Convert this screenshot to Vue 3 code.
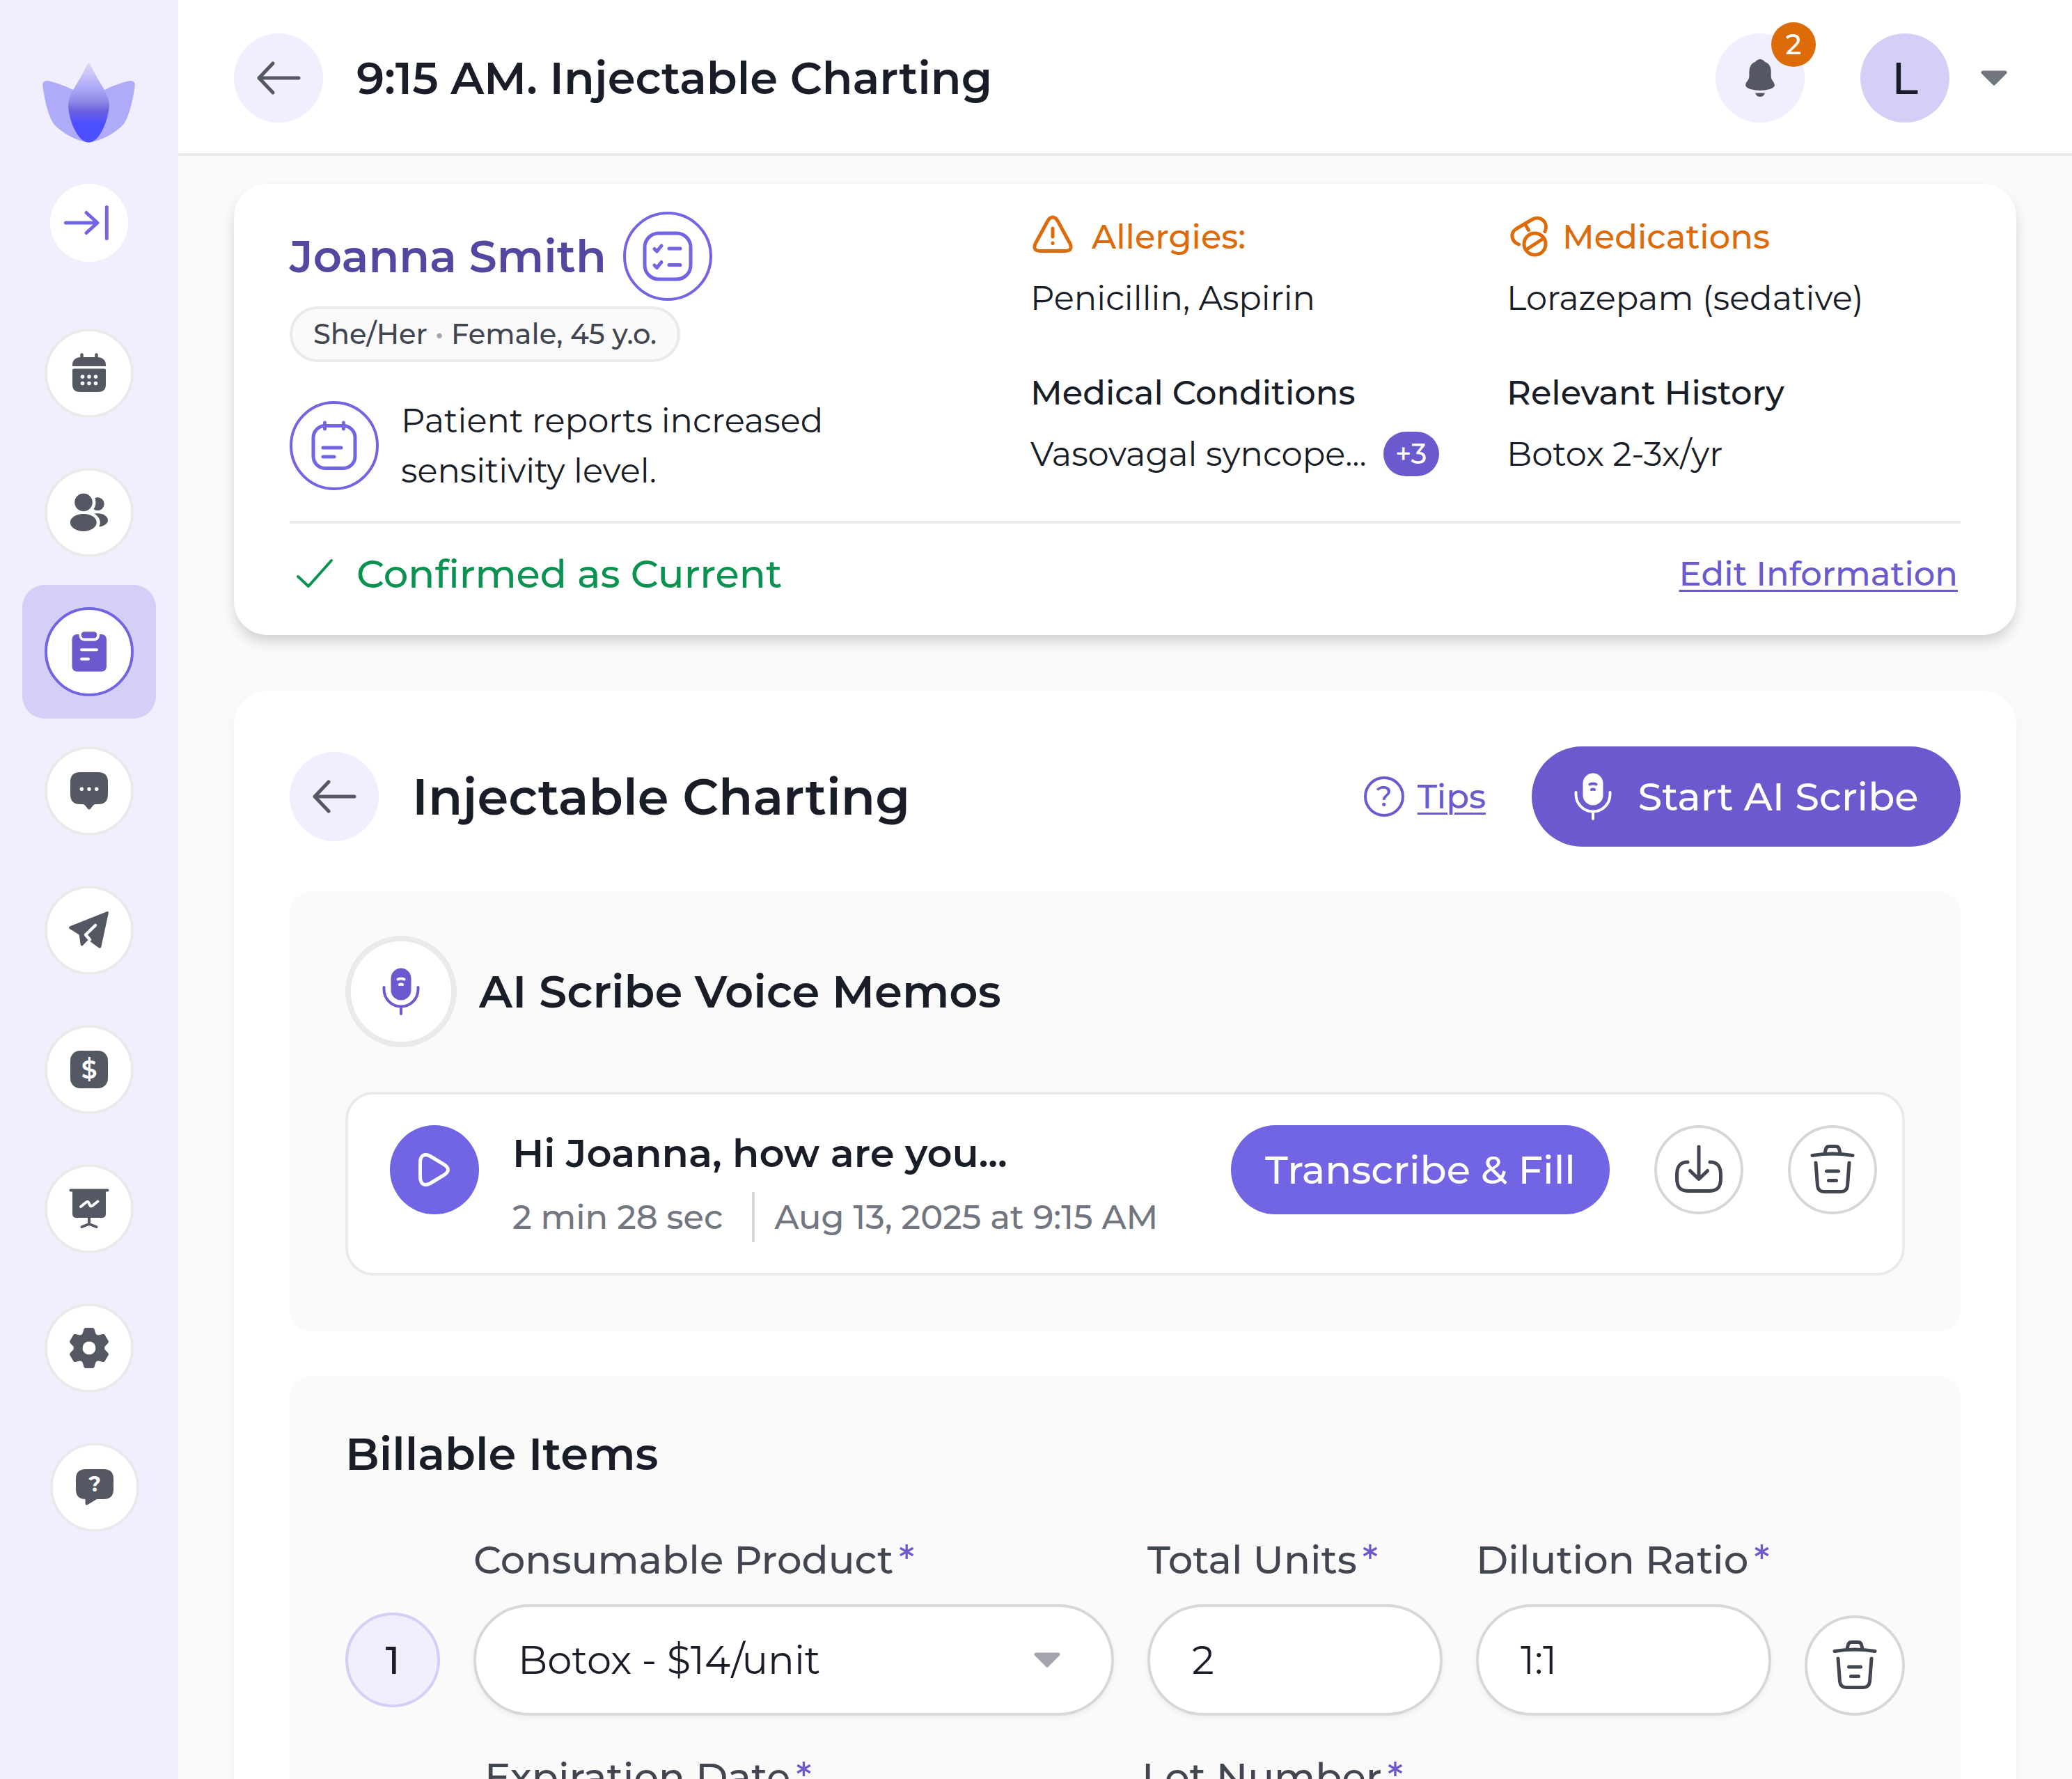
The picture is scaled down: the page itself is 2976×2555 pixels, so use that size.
<template>
  <div class="app">
    <aside class="sidebar">
      <svg class="logo" viewBox="0 0 134 116" aria-hidden="true">
        <defs>
          <linearGradient id="petal" x1="0" y1="0" x2="0" y2="1">
            <stop offset="0" stop-color="#dcd9f6" />
            <stop offset="0.3" stop-color="#b0abf8" />
            <stop offset="0.48" stop-color="#9089e6" />
            <stop offset="0.6" stop-color="#6e61df" />
            <stop offset="0.76" stop-color="#4c4fff" />
          </linearGradient>
        </defs>
        <path :d="sidePetal" fill="#b0abf8" />
        <path :d="sidePetal" fill="#b0abf8" transform="translate(133 0) scale(-1 1)" />
        <path
          d="M66.500 1Q68 1 69 3C74 14 80 24 86 34Q96 50 96 62C94 84 82 114.500 66.500 114.500C51 114.500 38 84 37 62Q37 50 47 34C53 24 59 14 64 3Q65 1 66.500 1Z"
          fill="url(#petal)" />
      </svg>

      <button class="collapse-btn" type="button" aria-label="Expand menu">
        <svg viewBox="0 0 112 112" class="line-icon">
          <path d="M22.500 56H67M52 41.500L68 56L52 70.500M81.300 33.500V78.500" />
        </svg>
      </button>

      <nav class="nav">
        <a v-for="item in navItems" :key="item.name" href="#" class="nav-item"
          :class="{ active: item.name === activeItem, help: item.name === 'Help' }" :aria-label="item.name"
          @click.prevent="activeItem = item.name">
          <span class="nav-circle">
            <svg viewBox="0 0 128 128" v-html="item.icon"></svg>
          </span>
        </a>
      </nav>
    </aside>

    <div class="main">
      <header class="topbar">
        <button class="back-btn" type="button" aria-label="Back">
          <svg viewBox="0 0 128 128" class="line-icon">
            <path :d="backArrow" />
          </svg>
        </button>
        <h1 class="page-title">9:15 AM. Injectable Charting</h1>
        <button class="bell-btn" type="button" aria-label="Notifications">
          <svg viewBox="0 0 128 128">
            <path
              d="M64 37Q68 37 70.500 40.500Q79.700 44 79.700 55V62Q79.700 65 82 68Q85 71.500 85 74.500Q84 78 78 80Q64 84 50 80Q44 78 43 74.500Q43 71 46 68Q48.400 65 48.400 62V55Q48.400 44 57.500 40.500Q60 37 64 37ZM57 85.500H71Q69 91 64 91Q59 91 57 85.500Z"
              fill="#535862" />
          </svg>
          <span class="bell-count">2</span>
        </button>
        <button class="account" type="button" aria-label="Account menu">
          <span class="avatar">L</span>
          <span class="account-caret">
            <svg class="caret" viewBox="0 0 38 22"><path d="M3 3H35L19 19Z" /></svg>
          </span>
        </button>
      </header>

      <main class="content">
        <section class="card patient">
          <div class="patient-info">
            <div class="patient-left">
              <div class="name-row">
                <h2 class="patient-name">Joanna Smith</h2>
                <button class="ring-btn" type="button" aria-label="Patient checklist">
                  <svg viewBox="0 0 128 128" class="line-icon">
                    <rect x="31" y="31" width="66" height="66" rx="20" />
                    <path d="M45 53.500L48.500 57L55 49M66 53H82M45 77L48.500 80.500L55 72.500M66 76.500H82" />
                  </svg>
                </button>
              </div>
              <p class="pill">She/Her <span class="pill-dot">•</span> Female, 45 y.o.</p>
              <div class="note-row">
                <button class="ring-btn" type="button" aria-label="Patient notes">
                  <svg viewBox="0 0 128 128" class="line-icon">
                    <rect x="34" y="35.500" width="60" height="61" rx="17" />
                    <path d="M50.500 31V40M77.500 31V40M48 67H74M48 80H64" />
                  </svg>
                </button>
                <p class="note">Patient reports increased sensitivity level.</p>
              </div>
            </div>

            <dl class="facts">
              <div class="fact">
                <dt class="warn">
                  <svg viewBox="0 0 64 64" class="line-icon">
                    <path
                      d="M32 4Q36 4 39 9L57 42Q61 52 50 52.500H14Q3 52 7 42L25 9Q28 4 32 4ZM32 20V32M32 41V41.500" />
                  </svg>
                  Allergies:
                </dt>
                <dd>Penicillin, Aspirin</dd>
              </div>
              <div class="fact">
                <dt class="warn meds">
                  <svg viewBox="0 0 64 64" class="line-icon">
                    <path d="M17.500 43C7 39 4 27 14 20.500L37 7C48 1 61 11 55 24.500M26.500 14L31.500 22.500" />
                    <circle cx="40.500" cy="42.500" r="15.500" />
                    <path d="M29 50L52 35" />
                  </svg>
                  Medications
                </dt>
                <dd>Lorazepam (sedative)</dd>
              </div>
              <div class="fact">
                <dt>Medical Conditions</dt>
                <dd>Vasovagal syncope... <span class="more">+3</span></dd>
              </div>
              <div class="fact">
                <dt>Relevant History</dt>
                <dd>Botox 2-3x/yr</dd>
              </div>
            </dl>
          </div>

          <div class="patient-footer">
            <p class="confirmed">
              <svg viewBox="0 0 72 72" class="line-icon"><path d="M12 40L27 54L60 17" /></svg>
              Confirmed as Current
            </p>
            <a href="#" class="link">Edit Information</a>
          </div>
        </section>

        <section class="card charting">
          <div class="charting-head">
            <button class="back-btn" type="button" aria-label="Back to charts">
              <svg viewBox="0 0 128 128" class="line-icon">
                <path :d="backArrow" />
              </svg>
            </button>
            <h2 class="charting-title">Injectable Charting</h2>
            <a href="#" class="tips">
              <svg viewBox="0 0 64 64" aria-hidden="true">
                <circle cx="32" cy="32" r="27" fill="none" stroke="currentColor" stroke-width="4" />
                <text x="32" y="46" text-anchor="middle" font-size="40" font-weight="500" fill="currentColor">?</text>
              </svg>
              <span class="link">Tips</span>
            </a>
            <button class="scribe-btn" type="button">
              <svg viewBox="0 0 72 72" class="mic">
                <rect x="21.500" y="2.500" width="29" height="46" rx="14.500" />
                <path class="mic-stand" d="M11.500 30V33A24.500 24.500 0 0 0 60.500 33V30M36 58V68" />
                <path class="mic-marks" d="M31.500 18.500Q36 16.500 40.500 18.500M34 26Q36 25 38 26" />
              </svg>
              Start AI Scribe
            </button>
          </div>

          <section class="panel">
            <div class="memos-head">
              <span class="mic-badge">
                <svg viewBox="0 0 72 72" class="mic">
                  <rect x="21.500" y="2.500" width="29" height="46" rx="14.500" />
                  <path class="mic-stand" d="M11.500 30V33A24.500 24.500 0 0 0 60.500 33V30M36 58V68" />
                  <path class="mic-marks" d="M31.500 18.500Q36 16.500 40.500 18.500M34 26Q36 25 38 26" />
                </svg>
              </span>
              <h3 class="panel-title">AI Scribe Voice Memos</h3>
            </div>

            <article class="memo">
              <button class="play-btn" type="button" aria-label="Play memo">
                <svg viewBox="0 0 128 128" class="line-icon">
                  <path
                    d="M43.500 54C43.500 43 50 40 58 44.500L77 56Q90 64 77 72L58 83.500C50 88 43.500 85 43.500 74Z" />
                </svg>
              </button>
              <div class="memo-text">
                <h4 class="memo-title">Hi Joanna, how are you...</h4>
                <p class="memo-meta">
                  <span>2 min 28 sec</span>
                  <span class="memo-date">Aug 13, 2025 at 9:15 AM</span>
                </p>
              </div>
              <button class="fill-btn" type="button">Transcribe &amp; Fill</button>
              <button class="icon-btn" type="button" aria-label="Download memo">
                <svg viewBox="0 0 128 128" class="line-icon">
                  <path
                    d="M64 31V77M51.500 65.500L64 77.500L76.500 65.500M48 53C36 53 32.500 60 32.500 72V76C32.500 90 38 94.500 50 94.500H78C90 94.500 95.500 90 95.500 76V72C95.500 60 92 53 80 53" />
                </svg>
              </button>
              <button class="icon-btn" type="button" aria-label="Delete memo">
                <svg viewBox="0 0 128 128" class="line-icon"><path :d="trash" /></svg>
              </button>
            </article>
          </section>

          <section class="panel">
            <h3 class="panel-title">Billable Items</h3>
            <div class="item-row">
              <span class="item-number">1</span>
              <div class="field product">
                <label for="product">Consumable Product<span class="required">*</span></label>
                <div class="select-wrap">
                  <select id="product" v-model="product">
                    <option>Botox - $14/unit</option>
                  </select>
                  <svg class="caret" viewBox="0 0 38 22"><path d="M3 3H35L19 19Z" /></svg>
                </div>
              </div>
              <div class="field">
                <label for="units">Total Units<span class="required">*</span></label>
                <input id="units" v-model="units" type="text" />
              </div>
              <div class="field">
                <label for="ratio">Dilution Ratio<span class="required">*</span></label>
                <input id="ratio" v-model="ratio" type="text" />
              </div>
              <button class="icon-btn large" type="button" aria-label="Delete item">
                <svg viewBox="0 0 128 128" class="line-icon"><path :d="trash" /></svg>
              </button>
            </div>
            <div class="item-extra">
              <div class="field">
                <label for="expiration">Expiration Date<span class="required">*</span></label>
                <input id="expiration" v-model="expiration" type="text" />
              </div>
              <div class="field">
                <label for="lot">Lot Number<span class="required">*</span></label>
                <input id="lot" v-model="lot" type="text" />
              </div>
            </div>
          </section>
        </section>
      </main>
    </div>
  </div>
</template>

<script setup>
import { ref } from 'vue';

const activeItem = ref('Charts');
const product = ref('Botox - $14/unit');
const units = ref('2');
const ratio = ref('1:1');
const expiration = ref('');
const lot = ref('');

const sidePetal =
  'M45 39.500Q26 30 8 26Q0 25 0.300 32.500C2 48 6 66 11 78Q14 86 18 90C28 100 46 112 66.500 114.500Z';
const backArrow = 'M56 43L36 64L56 85M36 64H93';
const trash =
  'M35 43.500Q64 38.500 93 43.500M53 40L54.500 34Q55.500 30.500 59.500 30.500H68.500Q72.500 30.500 73.500 34L75 40' +
  'M40 54L42.500 87Q43.500 95.500 52 95.500H76Q84.500 95.500 85.500 87L88 54M55.500 66H72.500M58.500 79.500H69.500';

// One gear tooth, repeated every 60 degrees around the hub
const tooth = 'M-11 -19Q-9.500 -20 -9 -22L-7.500 -27Q-6.800 -29 -5 -29H5Q6.800 -29 7.500 -27L9 -22Q9.500 -20 11 -19V0H-11Z';
const gearTeeth = [0, 60, 120, 180, 240, 300]
  .map((angle) => `<path d="${tooth}" transform="translate(64 64) rotate(${angle})" />`)
  .join('');

const navItems = [
  {
    name: 'Calendar',
    icon: `<path d="M40 54V52C40 45 45 41 52 41H76C83 41 88 45 88 52V54ZM42 57.500H86Q88 57.500 88 59V80Q88 91 77 91H51Q40 91 40 80V59Q40 57.500 42 57.500Z" />
      <path d="M53.500 37.500V43M74.500 37.500V43" stroke="currentColor" stroke-width="4.500" stroke-linecap="round" />
      <g fill="#fff"><circle cx="54.500" cy="69" r="2.800" /><circle cx="64" cy="69" r="2.800" /><circle cx="73.500" cy="69" r="2.800" />
      <circle cx="54.500" cy="78.500" r="2.800" /><circle cx="64" cy="78.500" r="2.800" /><circle cx="73.500" cy="78.500" r="2.800" /></g>`
  },
  {
    name: 'Patients',
    icon: `<circle cx="76.200" cy="51.800" r="9.500" /><ellipse cx="76" cy="75" rx="15" ry="9.700" />
      <circle cx="56" cy="49.500" r="17.500" fill="#fff" /><ellipse cx="55.800" cy="78.400" rx="24" ry="17" fill="#fff" />
      <circle cx="56" cy="49.500" r="12.800" /><ellipse cx="55.800" cy="78.400" rx="18.900" ry="12.500" />`
  },
  {
    name: 'Charts',
    icon: `<rect x="39.500" y="39" width="49.500" height="53.500" rx="7" />
      <rect x="49.500" y="31" width="29.500" height="17.500" rx="8" fill="#fff" />
      <rect x="52.700" y="35.200" width="22.600" height="9.300" rx="4.600" />
      <path d="M53 61.300H75M53 74.500H63" stroke="#fff" stroke-width="4" stroke-linecap="round" />`
  },
  {
    name: 'Messages',
    icon: `<path d="M51 37H77Q91 37 91 51V69Q91 83 77 83H73Q71 83 69.500 85L66.500 89Q64 92 61.500 89L58.500 85Q57 83 55 83H51Q37 83 37 69V51Q37 37 51 37Z" />
      <g fill="#fff"><circle cx="53.300" cy="61.300" r="2.700" /><circle cx="64" cy="61.300" r="2.700" /><circle cx="74.700" cy="61.300" r="2.700" /></g>`
  },
  {
    name: 'Campaigns',
    icon: `<path d="M36 58.500L89.500 37.200Q92.300 36.500 91.800 39.500L81.300 88Q80.300 91 77.500 89L62.500 78L55 85.700Q52.300 87.500 51.700 84.500L49.700 70.500L36 62Q34 60 36 58.500Z" />
      <path d="M73 57L59 70.500L65 77.500" fill="none" stroke="#fff" stroke-width="4.500" stroke-linecap="round" stroke-linejoin="round" />`
  },
  {
    name: 'Billing',
    icon: `<rect x="37" y="37" width="54" height="54" rx="14" />
      <text x="64" y="77" text-anchor="middle" font-size="36" font-weight="600" fill="#fff">$</text>`
  },
  {
    name: 'Reports',
    icon: `<path d="M40 38H88V71Q88 77 82 77H46Q40 77 40 71Z" />
      <path d="M37.500 37.500H90.500M64 77V86M53.500 90L64 86L74.500 90" fill="none" stroke="currentColor" stroke-width="4" stroke-linecap="round" stroke-linejoin="round" />
      <path d="M52 61L60 54.500Q62 53 63.500 55.500L65 58.500Q66 61.500 69 59.500L76.500 53.500" fill="none" stroke="#fff" stroke-width="4" stroke-linecap="round" />`
  },
  {
    name: 'Settings',
    icon: `${gearTeeth}<circle cx="64" cy="64" r="9.500" fill="#fff" />`
  },
  {
    name: 'Help',
    icon: `<path d="M51 38H77Q91 38 91 52V67Q91 81 77 81H67L54 89Q50.500 90.500 50.500 87V81Q37 81 37 67V52Q37 38 51 38Z" />
      <text x="64" y="70" text-anchor="middle" font-size="30" font-weight="700" fill="#fff">?</text>`
  }
];
</script>

<style>
body {
  margin: 0;
  background: #fafafa;
}
</style>

<style scoped>
.app {
  display: flex;
  height: 100vh;
  overflow: hidden;
  background: #fafafa;
  color: #181d27;
  font-family: Montserrat, Inter, 'Open Sans', sans-serif;
  font-size: 48px;
  line-height: 72px;
}

.app * {
  box-sizing: border-box;
}

h1,
h2,
h3,
h4,
p,
dl,
dd {
  margin: 0;
}

svg {
  display: block;
  flex: none;
}

button {
  display: flex;
  align-items: center;
  justify-content: center;
  flex: none;
  padding: 0;
  border: none;
  background: none;
  color: inherit;
  font: inherit;
  cursor: pointer;
}

.line-icon {
  fill: none;
  stroke: currentColor;
  stroke-width: 5;
  stroke-linecap: round;
  stroke-linejoin: round;
}

.link {
  color: #6a5acd;
  font-weight: 500;
  text-decoration: underline;
  text-decoration-thickness: 3px;
  text-underline-offset: 6px;
}

/* Sidebar */
.sidebar {
  display: flex;
  flex-direction: column;
  align-items: center;
  flex: none;
  width: 256px;
  padding-top: 90px;
  background: #f1effd;
}

.logo {
  width: 134px;
  height: 116px;
}

.collapse-btn {
  width: 112px;
  height: 112px;
  margin: 58px 0 64px;
  border-radius: 50%;
  background: #fff;
  color: #7265e3;
}

.nav {
  display: flex;
  flex-direction: column;
  gap: 8px;
}

.nav-item {
  display: flex;
  align-items: center;
  justify-content: center;
  width: 192px;
  height: 192px;
  border-radius: 32px;
  color: #535862;
}

.nav-item svg {
  width: 128px;
  height: 128px;
  fill: currentColor;
}

.nav-circle {
  display: flex;
  align-items: center;
  justify-content: center;
  width: 128px;
  height: 128px;
  border: 4px solid #e9eaeb;
  border-radius: 50%;
  background: #fff;
}

.nav-item.active {
  background: #d4cff6;
  color: #6a5acd;
}

.nav-item.active .nav-circle {
  border-color: #7265e3;
}

.nav-item.help {
  padding-left: 16px;
}

/* Top bar */
.main {
  display: flex;
  flex-direction: column;
  flex: 1;
  min-width: 0;
}

.topbar {
  display: flex;
  align-items: center;
  flex: none;
  height: 224px;
  padding: 4px 80px 0;
  border-bottom: 4px solid #e9eaeb;
  background: #fff;
}

.back-btn {
  width: 128px;
  height: 128px;
  border-radius: 50%;
  background: #f1effd;
  color: #535862;
}

.page-title {
  flex: 1;
  margin-left: 48px;
  font-size: 64px;
  font-weight: 600;
}

.bell-btn {
  position: relative;
  width: 128px;
  height: 128px;
  border-radius: 50%;
  background: #f1effd;
}

.bell-count {
  position: absolute;
  top: -16px;
  right: -16px;
  width: 64px;
  border-radius: 50%;
  background: #dd6b0a;
  color: #fff;
  font-size: 40px;
  font-weight: 500;
  line-height: 64px;
}

.account {
  gap: 32px;
  margin-left: 80px;
}

.avatar {
  width: 128px;
  border-radius: 50%;
  background: #d4cff6;
  font-size: 64px;
  font-weight: 500;
  line-height: 128px;
}

.account-caret {
  display: flex;
  justify-content: center;
  width: 64px;
  color: #717680;
}

.caret {
  width: 38px;
  height: 22px;
  fill: currentColor;
  stroke: currentColor;
  stroke-width: 5;
  stroke-linejoin: round;
}

/* Cards */
.content {
  display: flex;
  flex-direction: column;
  gap: 80px;
  padding: 40px 80px 80px;
}

.card {
  padding: 80px;
  border-radius: 48px;
  background: #fff;
  box-shadow: 0 8px 24px rgba(10, 13, 18, 0.04);
}

.patient {
  padding: 40px 80px 52px;
  box-shadow: 0 12px 20px -4px rgba(10, 13, 18, 0.16), 0 8px 24px rgba(10, 13, 18, 0.04);
}

.patient-info {
  display: flex;
  padding-bottom: 36px;
  border-bottom: 4px solid #e9eaeb;
}

.patient-left {
  display: flex;
  flex-direction: column;
  align-items: flex-start;
  width: 1064px;
}

.name-row {
  display: flex;
  align-items: center;
  gap: 24px;
}

.patient-name {
  color: #52489f;
  font-size: 64px;
  font-weight: 600;
}

.ring-btn {
  width: 128px;
  height: 128px;
  border: 4px solid #7265e3;
  border-radius: 50%;
  color: #7265e3;
}

.ring-btn svg,
.icon-btn svg {
  width: 128px;
  height: 128px;
}

.pill {
  height: 80px;
  margin: 8px 0 48px;
  padding: 0 30px;
  border: 4px solid #e9eaeb;
  border-radius: 40px;
  background: #fafafa;
  color: #414651;
  font-size: 40px;
  font-weight: 500;
}

.pill-dot {
  color: #a4a7ae;
  font-size: 40px;
}

.note-row {
  display: flex;
  align-items: center;
  gap: 32px;
}

.note {
  width: 640px;
}

.facts {
  display: grid;
  grid-template-columns: 684px 1fr;
  row-gap: 64px;
  flex: 1;
  align-content: start;
}

.fact {
  display: flex;
  flex-direction: column;
  gap: 16px;
}

.fact dt,
.fact dd {
  display: flex;
  align-items: center;
  gap: 24px;
  font-weight: 500;
}

.fact dd {
  font-weight: 400;
  white-space: nowrap;
}

.fact svg {
  width: 64px;
  height: 64px;
}

.fact .warn {
  color: #dd6b0a;
}

.fact .meds {
  gap: 16px;
}

.more {
  width: 80px;
  border-radius: 32px;
  background: #6a5acd;
  color: #fff;
  font-size: 40px;
  font-weight: 500;
  line-height: 64px;
  text-align: center;
}

.patient-footer {
  display: flex;
  align-items: center;
  justify-content: space-between;
  padding: 36px 4px 0 0;
}

.confirmed {
  display: flex;
  align-items: center;
  gap: 24px;
  color: #099250;
  font-size: 56px;
  font-weight: 500;
}

.confirmed svg {
  width: 72px;
  height: 72px;
  stroke-width: 4;
}

/* Charting */
.charting {
  display: flex;
  flex-direction: column;
  gap: 64px;
}

.charting-head {
  display: flex;
  align-items: center;
}

.charting-title {
  flex: 1;
  margin-left: 48px;
  font-size: 72px;
  font-weight: 600;
}

.tips {
  display: flex;
  align-items: center;
  gap: 16px;
  margin-right: 66px;
  color: #6a5acd;
  text-decoration: none;
}

.tips svg {
  width: 64px;
  height: 64px;
}

.scribe-btn {
  gap: 28px;
  min-width: 616px;
  height: 144px;
  padding-right: 8px;
  border-radius: 72px;
  background: #6a5acd;
  color: #fff;
  font-size: 56px;
  font-weight: 500;
}

.mic {
  width: 72px;
  height: 72px;
  fill: currentColor;
}

.mic-stand,
.mic-marks {
  fill: none;
  stroke: currentColor;
  stroke-width: 4;
  stroke-linecap: round;
}

.scribe-btn .mic-marks {
  stroke: #6a5acd;
}

.mic-badge .mic-marks {
  stroke: #fff;
}

.panel {
  padding: 64px 80px 80px;
  border-radius: 32px;
  background: #fafafa;
}

.panel-title {
  font-size: 64px;
  font-weight: 600;
  line-height: 96px;
}

.memos-head {
  display: flex;
  align-items: center;
  gap: 32px;
  margin-bottom: 64px;
}

.mic-badge {
  display: flex;
  align-items: center;
  justify-content: center;
  width: 160px;
  height: 160px;
  border: 8px solid #e9eaeb;
  border-radius: 50%;
  background: #fff;
  color: #6a5acd;
}

.memo {
  display: flex;
  align-items: flex-start;
  padding: 44px 36px 44px 60px;
  border: 4px solid #e9eaeb;
  border-radius: 40px;
  background: #fff;
}

.play-btn {
  width: 128px;
  height: 128px;
  border-radius: 50%;
  background: #7265e3;
  color: #fff;
}

.memo-text {
  flex: 1;
  margin-left: 48px;
}

.memo-title {
  margin-bottom: 16px;
  font-size: 56px;
  font-weight: 600;
  line-height: 80px;
}

.memo-meta {
  display: flex;
  color: #717680;
  font-weight: 500;
}

.memo-date {
  margin-left: 42px;
  padding-left: 28px;
  border-left: 4px solid #d5d7da;
}

.fill-btn {
  min-width: 544px;
  height: 128px;
  border-radius: 64px;
  background: #7265e3;
  color: #fff;
  font-size: 56px;
  font-weight: 500;
}

.icon-btn {
  width: 128px;
  height: 128px;
  margin-left: 64px;
  border: 4px solid #d5d7da;
  border-radius: 50%;
  background: #fff;
  color: #414651;
}

.icon-btn.large {
  width: 144px;
  height: 144px;
  margin-left: 0;
}

/* Billable items */
.item-row {
  display: flex;
  align-items: flex-end;
  gap: 48px;
  margin-top: 64px;
}

.item-number {
  flex: none;
  width: 136px;
  margin-bottom: 12px;
  border: 4px solid #d4cff6;
  border-radius: 50%;
  background: #f1effd;
  font-size: 56px;
  font-weight: 500;
  line-height: 128px;
  text-align: center;
}

.field {
  display: flex;
  flex-direction: column;
  gap: 24px;
  flex: 1;
  min-width: 0;
}

.field.product {
  flex: none;
  width: 920px;
}

.field label {
  color: #414651;
  font-size: 56px;
  font-weight: 500;
  line-height: 80px;
}

.required {
  margin-left: 8px;
  color: #6a5acd;
}

.field input,
.field select {
  width: 100%;
  height: 160px;
  padding: 0 60px;
  border: 4px solid #d5d7da;
  border-radius: 80px;
  background: #fff;
  box-shadow: 0 4px 8px rgba(10, 13, 18, 0.05);
  color: #181d27;
  font: inherit;
  font-size: 56px;
  appearance: none;
}

.select-wrap {
  position: relative;
}

.select-wrap .caret {
  position: absolute;
  top: 69px;
  right: 77px;
  color: #a4a7ae;
  pointer-events: none;
}

.item-extra {
  display: grid;
  grid-template-columns: 1fr 1fr;
  gap: 48px;
  margin: 48px 200px 0;
}
</style>
